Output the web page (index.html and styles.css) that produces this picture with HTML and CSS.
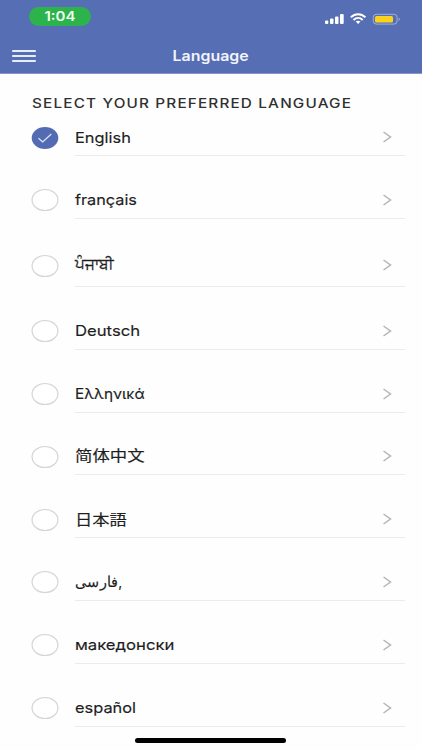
FILE: index.html
```html
<!DOCTYPE html>
<html lang="en">
<head>
<meta charset="utf-8">
<title>Language</title>
<link rel="stylesheet" href="styles.css">
</head>
<body>
<div class="screen">
<header class="header">
  <div class="status">
    <div class="clock"><span>1:04</span></div>
    <svg class="indicators" width="76" height="14" viewBox="0 0 76 14">
      <g fill="#fff">
        <rect x="1" y="8.5" width="3.3" height="3.5" rx="1"/>
        <rect x="6" y="6.6" width="3.5" height="5.4" rx="1"/>
        <rect x="11" y="4.5" width="3.5" height="7.5" rx="1"/>
        <rect x="16" y="2" width="3.7" height="10" rx="1"/>
      </g>
      <g fill="none" stroke="#fff" stroke-width="2">
        <path d="M26.8 5.3C31 1.2 37.2 1.2 41.4 5.3"/>
        <path d="M29.5 8C32.2 5.4 36 5.4 38.7 8"/>
      </g>
      <path d="M31.7 9.5Q34.1 7.8 36.5 9.5L34.1 12Z" fill="#fff"/>
      <rect x="49.3" y="2.3" width="23.8" height="9.8" rx="3" fill="none" stroke="#a3afd2"/>
      <rect x="51" y="4" width="18" height="6.5" rx="1.5" fill="#fcd21c"/>
      <path d="M74.7 5.5Q76.8 7.2 74.7 9Z" fill="#a3afd2"/>
    </svg>
  </div>
  <div class="navbar">
    <svg class="menu" width="24" height="14" viewBox="0 0 24 14"><path d="M.8 2H23.2M.8 7H23.2M.8 12H23.2" stroke="#e6ecf8" stroke-width="1.8" stroke-linecap="round"/></svg>
    <h1 class="title"><span>Language</span></h1>
  </div>
</header>
<main class="content">
  <h2 class="heading"><span>SELECT YOUR PREFERRED LANGUAGE</span></h2>
  <ul class="list">
    <li class="item"><svg class="radio" viewBox="0 0 28 24"><ellipse cx="14" cy="12" rx="13.3" ry="11" fill="#526bb3"/><path d="M7.5 12.2L11.7 16L20.3 8" fill="none" stroke="#e2e8f7" stroke-width="1.2"/></svg><div class="row"><span class="label english">English</span><svg class="chevron" viewBox="0 0 10 12"><path d="M1.5 1L8.5 6L1.5 11"/></svg></div></li>
    <li class="item"><svg class="radio" viewBox="0 0 28 24"><ellipse class="ring" cx="14" cy="12" rx="12.9" ry="10.5"/></svg><div class="row"><span class="label french" lang="fr">français</span><svg class="chevron" viewBox="0 0 10 12"><path d="M1.5 1L8.5 6L1.5 11"/></svg></div></li>
    <li class="item tall"><svg class="radio" viewBox="0 0 28 24"><ellipse class="ring" cx="14" cy="12" rx="12.9" ry="10.5"/></svg><div class="row"><span class="label punjabi" lang="pa">ਪੰਜਾਬੀ</span><svg class="chevron" viewBox="0 0 10 12"><path d="M1.5 1L8.5 6L1.5 11"/></svg></div></li>
    <li class="item"><svg class="radio" viewBox="0 0 28 24"><ellipse class="ring" cx="14" cy="12" rx="12.9" ry="10.5"/></svg><div class="row"><span class="label german" lang="de">Deutsch</span><svg class="chevron" viewBox="0 0 10 12"><path d="M1.5 1L8.5 6L1.5 11"/></svg></div></li>
    <li class="item"><svg class="radio" viewBox="0 0 28 24"><ellipse class="ring" cx="14" cy="12" rx="12.9" ry="10.5"/></svg><div class="row"><span class="label greek" lang="el">Ελληνικά</span><svg class="chevron" viewBox="0 0 10 12"><path d="M1.5 1L8.5 6L1.5 11"/></svg></div></li>
    <li class="item"><svg class="radio" viewBox="0 0 28 24"><ellipse class="ring" cx="14" cy="12" rx="12.9" ry="10.5"/></svg><div class="row"><span class="label chinese" lang="zh-CN">简体中文</span><svg class="chevron" viewBox="0 0 10 12"><path d="M1.5 1L8.5 6L1.5 11"/></svg></div></li>
    <li class="item"><svg class="radio" viewBox="0 0 28 24"><ellipse class="ring" cx="14" cy="12" rx="12.9" ry="10.5"/></svg><div class="row"><span class="label japanese" lang="ja">日本語</span><svg class="chevron" viewBox="0 0 10 12"><path d="M1.5 1L8.5 6L1.5 11"/></svg></div></li>
    <li class="item"><svg class="radio" viewBox="0 0 28 24"><ellipse class="ring" cx="14" cy="12" rx="12.9" ry="10.5"/></svg><div class="row"><span class="label persian" lang="fa">فارسی,</span><svg class="chevron" viewBox="0 0 10 12"><path d="M1.5 1L8.5 6L1.5 11"/></svg></div></li>
    <li class="item"><svg class="radio" viewBox="0 0 28 24"><ellipse class="ring" cx="14" cy="12" rx="12.9" ry="10.5"/></svg><div class="row"><span class="label macedonian" lang="mk">македонски</span><svg class="chevron" viewBox="0 0 10 12"><path d="M1.5 1L8.5 6L1.5 11"/></svg></div></li>
    <li class="item"><svg class="radio" viewBox="0 0 28 24"><ellipse class="ring" cx="14" cy="12" rx="12.9" ry="10.5"/></svg><div class="row"><span class="label spanish" lang="es">español</span><svg class="chevron" viewBox="0 0 10 12"><path d="M1.5 1L8.5 6L1.5 11"/></svg></div></li>
  </ul>
</main>
<div class="home-indicator"></div>
</div>
</body>
</html>
```
FILE: styles.css
```css
* { box-sizing: border-box; }
body {
  margin: 0;
  background: #fefefe;
  color: #1e1e1e;
  font-family: Inter, "Noto Sans", "Noto Sans CJK SC", sans-serif;
}
.screen { position: relative; width: 422px; height: 750px; overflow: hidden; }
.header { height: 74px; background: #566eb4; border-bottom: 1px solid #8495c8; }
.status {
  display: flex;
  justify-content: space-between;
  align-items: flex-start;
  height: 38px;
  padding: 7px 22px 0 29px;
}
.clock {
  display: flex;
  align-items: center;
  justify-content: center;
  width: 62px;
  height: 18.5px;
  border-radius: 10px;
  background: #2db34c;
  color: #f4fff5;
  font-size: 12.5px;
  font-weight: 600;
}
.clock span { transform: scaleX(1.2); }
.indicators { margin-top: 5px; }
.navbar {
  display: grid;
  grid-template-columns: 24px 1fr 24px;
  align-items: center;
  height: 35px;
  padding: 0 12px;
}
.title {
  margin: 0;
  text-align: center;
  font-size: 14.5px;
  font-weight: 600;
  line-height: 20px;
  color: #f1f4fb;
}
.title span { display: inline-block; transform: scaleX(1.1); }
.content { padding: 19px 17px 0 31px; }
.heading {
  height: 20px;
  margin: 0 0 7px 1px;
  font-size: 13px;
  font-weight: 500;
  line-height: 20px;
  letter-spacing: 1px;
  white-space: nowrap;
  color: #303030;
}
.heading span { display: inline-block; transform: scaleX(1.175); transform-origin: left; }
.list {
  display: flex;
  flex-direction: column;
  gap: 26.8px;
  margin: 0;
  padding: 0;
  list-style: none;
}
.item { display: flex; align-items: center; gap: 16px; height: 36px; }
.tall { height: 41.4px; }
.radio { width: 28px; height: 24px; flex: none; margin-bottom: 1px; }
.ring { fill: #fff; stroke: #d5d5d5; stroke-width: 1.2; }
.row {
  display: flex;
  flex: 1;
  align-items: center;
  justify-content: space-between;
  height: 100%;
  padding-right: 13.5px;
  border-bottom: 1px solid #ebebeb;
}
.label {
  font-size: 14.5px;
  font-weight: 400;
  line-height: 22px;
  white-space: nowrap;
  transform-origin: left;
  -webkit-text-stroke: 0.15px #1e1e1e;
}
.english { transform: scaleX(1.13); }
.french { transform: scaleX(1.12); }
.punjabi { transform: scaleX(1.02); margin-bottom: 3px; -webkit-text-stroke-width: 0.3px; }
.german { transform: scaleX(1.15); }
.greek { transform: scaleX(1.06); }
.chinese { transform: scaleX(1.2); margin-bottom: 2px; }
.japanese { transform: scaleX(1.19); margin-bottom: 2px; font-family: "Noto Sans CJK JP", sans-serif; }
.persian { transform: scaleX(.96); }
.macedonian { transform: scaleX(1.15); }
.spanish { transform: scaleX(1.13); }
.chevron { width: 10px; height: 12px; margin-bottom: 1px; fill: none; stroke: #b4b4b4; stroke-width: 1.5; }
.home-indicator {
  position: absolute;
  left: 135px;
  top: 738px;
  width: 151px;
  height: 5px;
  border-radius: 3px;
  background: #000;
}
```
